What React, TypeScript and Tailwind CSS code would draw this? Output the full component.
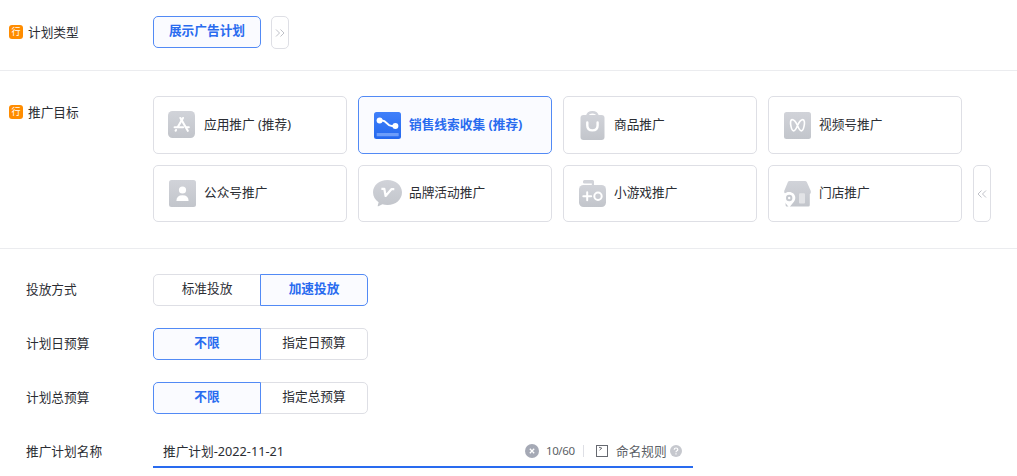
import React from "react";
import type { ReactNode } from "react";

function IconDefs() {
  return (
    <svg width="0" height="0" className="absolute" aria-hidden="true">
      <defs>
        <linearGradient id="gray" x1="0" y1="0" x2="0" y2="1">
          <stop offset="0" stopColor="#d1d3d9" />
          <stop offset="1" stopColor="#c2c5cb" />
        </linearGradient>
        <linearGradient id="blue" x1="0" y1="0" x2="0" y2="1">
          <stop offset="0" stopColor="#4080fa" />
          <stop offset="1" stopColor="#2468ee" />
        </linearGradient>
      </defs>
    </svg>
  );
}

function Icon({ children }: { children: ReactNode }) {
  return (
    <svg width="30" height="30" viewBox="0 0 30 30" fill="none" className="shrink-0">
      {children}
    </svg>
  );
}

const appIcon = (
  <Icon>
    <rect x="1" y="1" width="27" height="27" rx="4.5" fill="url(#gray)" />
    <g stroke="#fff" strokeWidth="2.1" strokeLinecap="round">
      <path d="M16 8 L10.8 17" />
      <path d="M13.4 8 L20.8 20.8" />
      <path d="M7.6 17.3 H16.2 M19.6 17.3 H21.8" />
      <path d="M9 20 L8.6 20.7" />
    </g>
  </Icon>
);

const leadsIcon = (
  <Icon>
    <rect x="2" y="2" width="27" height="27" rx="2.5" fill="url(#blue)" />
    <path d="M7.5 10.4 H10 C15 10.4 14.5 16 20 16 H23" stroke="#fff" strokeWidth="2" />
    <circle cx="7.6" cy="10.4" r="3" fill="#fff" />
    <circle cx="23.4" cy="16" r="3" fill="#fff" />
    <rect x="4.7" y="23" width="22" height="3.2" rx=".5" fill="#6d9dfa" />
  </Icon>
);

const goodsIcon = (
  <Icon>
    <path d="M10 6.5 C10.6 3.4 12.4 2.2 15.4 2.2 C18.4 2.2 20.2 3.4 20.8 6.5" stroke="#d1d3d9" strokeWidth="2.4" />
    <path d="M6.5 5 H24.5 Q27.5 5 27.5 8 V27 Q27.5 30 24.5 30 H6.5 Q3.5 30 3.5 27 V8 Q3.5 5 6.5 5Z" fill="url(#gray)" />
    <path d="M10.3 12.5 V15.5 Q10.3 20.4 15.4 20.4 Q20.6 20.4 20.6 15.5 V12.5" stroke="#fff" strokeWidth="2.4" strokeLinecap="round" />
  </Icon>
);

const channelsIcon = (
  <Icon>
    <rect x="2" y="2" width="27" height="27" rx="2.5" fill="url(#gray)" />
    <path
      d="M15.5 15.5 C13.7 11.7 11.8 9.6 10.2 9.6 C8.3 9.6 8.2 13.2 9 16.4 C9.6 19.3 10.5 20.9 11.7 20.9 C13.3 20.9 14.3 18.3 15.5 15.5 C17.3 11.7 19.2 9.6 20.8 9.6 C22.7 9.6 22.8 13.2 22 16.4 C21.4 19.3 20.5 20.9 19.3 20.9 C17.7 20.9 16.7 18.3 15.5 15.5Z"
      stroke="#fff"
      strokeWidth="1.6"
    />
  </Icon>
);

const accountIcon = (
  <Icon>
    <rect x="2" y="1" width="27" height="27" rx="2.5" fill="url(#gray)" />
    <circle cx="15.5" cy="11" r="3.6" fill="#fff" />
    <path d="M9.4 22 Q9.4 16.3 15.5 16.3 Q21.6 16.3 21.6 22Z" fill="#fff" />
  </Icon>
);

const brandIcon = (
  <Icon>
    <path
      d="M15.5 1 C23.6 1 30 6.2 30 13.3 C30 20.7 23.6 26 15.5 26 C13.6 26 11.9 25.7 10.4 25.2 L6.4 27.3 C5.7 27.5 5.6 27 5.8 26.4 L6.6 23.2 C3.2 21 1 17.5 1 13.3 C1 6.2 7.3 1 15.5 1Z"
      fill="url(#gray)"
    />
    <path d="M9.4 9.8 H12.3 L13.6 17 L19.4 10.2 H22.3" stroke="#fff" strokeWidth="2.2" strokeLinejoin="round" />
  </Icon>
);

const gameIcon = (
  <Icon>
    <path d="M6 2.5 Q6 1 7.5 1 H15.5 Q17 1 17 2.5 V6.5 H14.8 V4.6 H7.5 Q6 4.6 6 3.5Z" fill="#d1d3d9" />
    <rect x="2" y="6" width="27" height="22" rx="4.5" fill="url(#gray)" />
    <path d="M6.3 17.2 H14.2 M10.2 13.2 V21.2" stroke="#fff" strokeWidth="2" strokeLinecap="round" />
    <circle cx="21" cy="17.2" r="3.7" stroke="#fff" strokeWidth="2" />
  </Icon>
);

const storeIcon = (
  <Icon>
    <path d="M7.5 2 H23 Q24.3 2 24.9 3.2 L28.8 12 Q29.2 14.6 27.8 15.3 V26 Q27.8 27.5 26.3 27.5 H5 Q3.6 27.5 3.6 26 V15 Q1.8 14 2.2 12 L5.8 3.2 Q6.3 2 7.5 2Z" fill="url(#gray)" />
    <path d="M7.2 29 C5 25 1 22.8 1 18.8 C1 15.4 3.4 13 7 13 C10.6 13 13.3 15.4 13.3 18.8 C13.3 22.8 9.4 25 7.2 29Z" fill="#fff" />
    <circle cx="7.2" cy="19" r="2.2" stroke="#c6c9cf" strokeWidth="2" />
    <rect x="17" y="14.2" width="6" height="10.2" rx="1" fill="#e2e3e6" />
  </Icon>
);

function RowTag() {
  return (
    <svg width="14" height="14" viewBox="0 0 14 14" className="shrink-0">
      <rect width="14" height="14" rx="3" fill="#ff8c00" />
      <text x="7" y="10.3" textAnchor="middle" fontSize="9" fill="#fff" fontFamily="Noto Sans CJK SC, sans-serif">
        行
      </text>
    </svg>
  );
}

function TaggedLabel({ children }: { children: ReactNode }) {
  return (
    <div className="flex w-[153px] shrink-0 items-center gap-[5px] pl-[9px] leading-4">
      <RowTag />
      <span>{children}</span>
    </div>
  );
}

function Chevrons({ left = false }: { left?: boolean }) {
  return (
    <svg width="10" height="8" viewBox="0 0 10 8" fill="none" stroke="#bfc1c8" className={left ? "rotate-180" : ""}>
      <path d="M1 .5 L4.5 4 L1 7.5 M5.5 .5 L9 4 L5.5 7.5" />
    </svg>
  );
}

interface GoalCardProps {
  icon: ReactNode;
  text: string;
  active?: boolean;
  raised?: boolean;
}

function GoalCard({ icon, text, active = false, raised = false }: GoalCardProps) {
  return (
    <button
      className={
        "flex items-start gap-[7px] rounded-[5px] border pt-[13px] pl-[13px] " +
        (active ? "border-[#528af5] bg-[#fafbff] font-bold text-[#296bef]" : "border-[#dedfe5] bg-white")
      }
    >
      {icon}
      <span className={"leading-4 whitespace-nowrap " + (raised ? "mt-[5px]" : "mt-1.5")}>{text}</span>
    </button>
  );
}

function Segmented({ options, selected }: { options: string[]; selected: number }) {
  return (
    <div className="flex h-8 w-[215px]">
      {options.map((option, i) => (
        <button
          key={option}
          className={
            "flex h-8 w-[108px] shrink-0 items-center justify-center border pb-1 leading-4 " +
            (i === 0 ? "rounded-l-[5px] " : "-ml-px rounded-r-[5px] ") +
            (i === selected
              ? "z-10 border-[#528af5] bg-[#fafbff] font-bold text-[#296bef]"
              : "border-[#dedfe5] bg-white")
          }
        >
          {option}
        </button>
      ))}
    </div>
  );
}

function FormRow({ label, children }: { label: string; children: ReactNode }) {
  return (
    <div className="flex h-8 items-center">
      <div className="w-[153px] shrink-0 pb-0.5 pl-[26px] leading-4">{label}</div>
      {children}
    </div>
  );
}

export default function App() {
  return (
    <main className="flex h-[476px] w-[1017px] flex-col overflow-hidden bg-white font-['Noto_Sans','Noto_Sans_CJK_SC',sans-serif] text-[12.7px] text-[#2b2d33]">
      <IconDefs />
      <section className="flex h-[71px] shrink-0 border-b border-[#ebecef] pt-4">
        <div className="flex h-8">
          <TaggedLabel>计划类型</TaggedLabel>
          <button className="flex h-8 w-[108px] items-center justify-center rounded-[5px] border border-[#528af5] bg-[#fafbff] pb-1 leading-4 font-bold text-[#296bef]">
            展示广告计划
          </button>
        </div>
        <button className="ml-2.5 flex h-[33px] w-[18px] items-center justify-center rounded-[5px] border border-[#dedfe5]">
          <Chevrons />
        </button>
      </section>

      <section className="flex h-[178px] shrink-0 border-b border-[#ebecef] pt-[25px]">
        <div className="flex h-8">
          <TaggedLabel>推广目标</TaggedLabel>
        </div>
        <div className="grid h-[126px] grid-cols-[repeat(4,194px)] grid-rows-[58px_57px] gap-[11px]">
          <GoalCard icon={appIcon} text="应用推广 (推荐)" />
          <GoalCard icon={leadsIcon} text="销售线索收集 (推荐)" active />
          <GoalCard icon={goodsIcon} text="商品推广" />
          <GoalCard icon={channelsIcon} text="视频号推广" />
          <GoalCard icon={accountIcon} text="公众号推广" raised />
          <GoalCard icon={brandIcon} text="品牌活动推广" raised />
          <GoalCard icon={gameIcon} text="小游戏推广" raised />
          <GoalCard icon={storeIcon} text="门店推广" raised />
        </div>
        <button className="mt-[69px] ml-[11px] flex h-[57px] w-[18px] items-center justify-center rounded-[5px] border border-[#dedfe5]">
          <Chevrons left />
        </button>
      </section>

      <section className="flex flex-col gap-[22px] pt-[25px]">
        <FormRow label="投放方式">
          <Segmented options={["标准投放", "加速投放"]} selected={1} />
        </FormRow>
        <FormRow label="计划日预算">
          <Segmented options={["不限", "指定日预算"]} selected={0} />
        </FormRow>
        <FormRow label="计划总预算">
          <Segmented options={["不限", "指定总预算"]} selected={0} />
        </FormRow>
        <FormRow label="推广计划名称">
          <div className="flex h-8 w-[540px] items-center border-b-2 border-[#296bef] pl-2.5">
            <span className="w-[362px] leading-4">推广计划-2022-11-21</span>
            <svg width="14" height="14" viewBox="0 0 14 14" className="shrink-0">
              <circle cx="7" cy="7" r="7" fill="#a5a9b5" />
              <path d="M4.8 4.8 L9.2 9.2 M9.2 4.8 L4.8 9.2" stroke="#fff" strokeWidth="1.3" />
            </svg>
            <span className="ml-[7px] w-[30px] text-[11.5px] leading-4 tracking-[-0.4px] whitespace-nowrap text-[#5c5f66]">10/60</span>
            <span className="ml-[7px] h-3 w-px bg-[#dedfe5]" />
            <svg width="12" height="12" viewBox="0 0 12 12" fill="none" stroke="#666970" className="ml-3 shrink-0">
              <rect x=".5" y=".5" width="11" height="11" />
              <path d="M3 2.2 L5.8 3.2 L3.5 5.2" />
            </svg>
            <span className="ml-2 leading-4 whitespace-nowrap text-[#5c5f66]">命名规则</span>
            <svg width="12" height="12" viewBox="0 0 12 12" className="ml-[3px] shrink-0">
              <circle cx="6" cy="6" r="6" fill="#c6c8ce" />
              <path d="M4.2 4.8 Q4.2 3 6 3 Q7.8 3 7.8 4.6 Q7.8 5.5 6.7 6 Q6 6.4 6 7.2 M6 8.2 V9.4" fill="none" stroke="#fff" strokeWidth="1.2" />
            </svg>
          </div>
        </FormRow>
      </section>
    </main>
  );
}
